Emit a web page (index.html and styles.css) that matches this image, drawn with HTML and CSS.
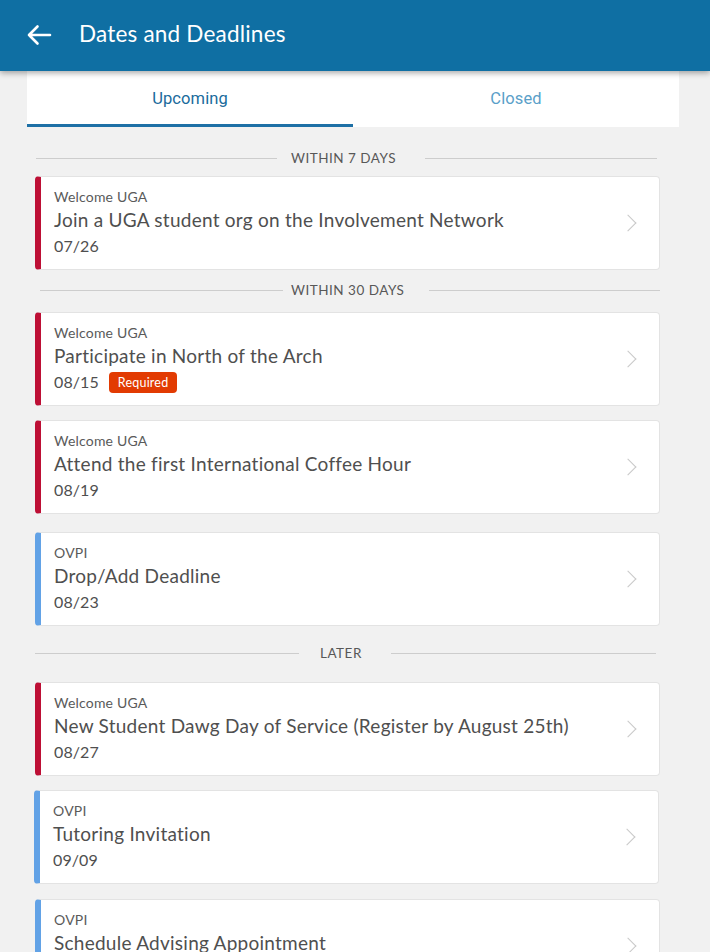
FILE: index.html
```html
<!DOCTYPE html>
<html>
<head>
<meta charset="utf-8">
<link rel="stylesheet" href="styles.css">
</head>
<body>
<header class="appbar">
  <svg class="back" width="26" height="22" viewBox="0 0 26 22"><path d="M24 11H3M11.5 2.5L3 11l8.5 8.5" fill="none" stroke="#fff" stroke-width="2.6" stroke-linecap="round" stroke-linejoin="round"/></svg>
  <h1 class="title">Dates and Deadlines</h1>
</header>
<nav class="tabs">
  <div class="tab active">Upcoming</div>
  <div class="tab">Closed</div>
</nav>
<main class="list">
  <div class="section s1"><span class="line first"></span><span class="label">WITHIN 7 DAYS</span><span class="line"></span></div>
  <div class="card red">
    <div class="src">Welcome UGA</div>
    <div class="name">Join a UGA student org on the Involvement Network</div>
    <div class="date">07/26</div>
    <span class="chev"></span>
  </div>
  <div class="section s2"><span class="line first"></span><span class="label">WITHIN 30 DAYS</span><span class="line"></span></div>
  <div class="card red">
    <div class="src">Welcome UGA</div>
    <div class="name">Participate in North of the Arch</div>
    <div class="date">08/15 <span class="badge">Required</span></div>
    <span class="chev"></span>
  </div>
  <div class="card red">
    <div class="src">Welcome UGA</div>
    <div class="name">Attend the first International Coffee Hour</div>
    <div class="date">08/19</div>
    <span class="chev"></span>
  </div>
  <div class="card blue gap">
    <div class="src">OVPI</div>
    <div class="name">Drop/Add Deadline</div>
    <div class="date">08/23</div>
    <span class="chev"></span>
  </div>
  <div class="section s3"><span class="line first"></span><span class="label">LATER</span><span class="line"></span></div>
  <div class="card red">
    <div class="src">Welcome UGA</div>
    <div class="name">New Student Dawg Day of Service (Register by August 25th)</div>
    <div class="date">08/27</div>
    <span class="chev"></span>
  </div>
  <div class="card blue shift">
    <div class="src">OVPI</div>
    <div class="name">Tutoring Invitation</div>
    <div class="date">09/09</div>
    <span class="chev"></span>
  </div>
  <div class="card blue">
    <div class="src">OVPI</div>
    <div class="name">Schedule Advising Appointment</div>
    <div class="date">09/15</div>
    <span class="chev"></span>
  </div>
</main>
</body>
</html>
```

FILE: styles.css
```css
* { box-sizing: border-box; }
html, body { margin: 0; padding: 0; }
body {
  background: #f1f1f1;
  font-family: "Lato", "Open Sans", sans-serif;
  width: 710px;
  height: 952px;
  overflow: hidden;
}
.appbar {
  position: relative;
  z-index: 2;
  height: 71px;
  background: #0f6fa3;
  display: flex;
  align-items: center;
  padding-left: 26px;
  box-shadow: 0 2px 6px rgba(0,0,0,0.35);
}
.back { display: block; margin-top: -2px; }
.title {
  margin: -4px 0 0 27px;
  color: #fff;
  font-weight: 400;
  font-size: 22.5px;
  letter-spacing: 0.2px;
}
.tabs {
  margin: 0 31px 0 27px;
  height: 56px;
  background: #fff;
  display: flex;
}
.tab {
  flex: 1;
  display: flex;
  align-items: center;
  justify-content: center;
  font-family: "Roboto", sans-serif;
  font-size: 16.5px;
  color: #5a9fc9;
  padding-bottom: 1px;
  letter-spacing: 0.1px;
}
.tab.active {
  color: #1a6b9c;
  border-bottom: 3px solid #1e70a6;
  padding-top: 3px;
}
.list {
  padding: 0 50px 0 35px;
  display: flex;
  flex-direction: column;
}
.section {
  display: flex;
  align-items: center;
  height: 20px;
  color: #585858;
  font-size: 13.5px;
  letter-spacing: 0.5px;
}
.section .line { flex: 1; height: 1px; background: #cdcdcd; }
.section .line.first { flex: none; }
.s1 { margin: 21px 3px 8px 1px; }
.s1 .first { width: 241px; }
.s1 .label { padding: 0 0 0 14px; width: 148px; }
.s2 { margin: -4px 0 12px 5px; }
.s2 .first { width: 243px; }
.s2 .label { padding: 0 0 0 8px; width: 146px; }
.s3 { margin: 3px 4px 19px 0; }
.s3 .first { width: 264px; }
.s3 .label { padding: 0 0 0 21px; width: 92px; }
.card {
  position: relative;
  background: #fff;
  border-radius: 4px;
  border: 1px solid #e3e3e3;
  border-left: 6px solid #bd0f35;
  padding: 10px 50px 10px 13px;
  margin-bottom: 14px;
  color: #505050;
}
.card.blue { border-left-color: #62a2e6; }
.card.gap { margin-top: 4px; }
.card.shift { margin-left: -1px; margin-right: 1px; margin-bottom: 15px; }
.src { font-size: 14px; line-height: 20px; color: #5a5a5a; letter-spacing: 0.2px; }
.name { font-size: 19px; line-height: 26px; color: #4f4f4f; letter-spacing: 0.25px; }
.date { font-size: 16px; line-height: 26px; color: #4f4f4f; display: flex; align-items: center; letter-spacing: 0.1px; }
.badge {
  margin-left: 10px;
  background: #e23b02;
  color: #fff;
  font-size: 12.5px;
  line-height: 21px;
  padding: 0 9px;
  border-radius: 4px;
  letter-spacing: 0.2px;
}
.chev {
  position: absolute;
  right: 25px;
  top: 50%;
  width: 12px;
  height: 12px;
  border-top: 1.6px solid #c9c9c9;
  border-right: 1.6px solid #c9c9c9;
  transform: translateY(-50%) rotate(45deg);
}
```
